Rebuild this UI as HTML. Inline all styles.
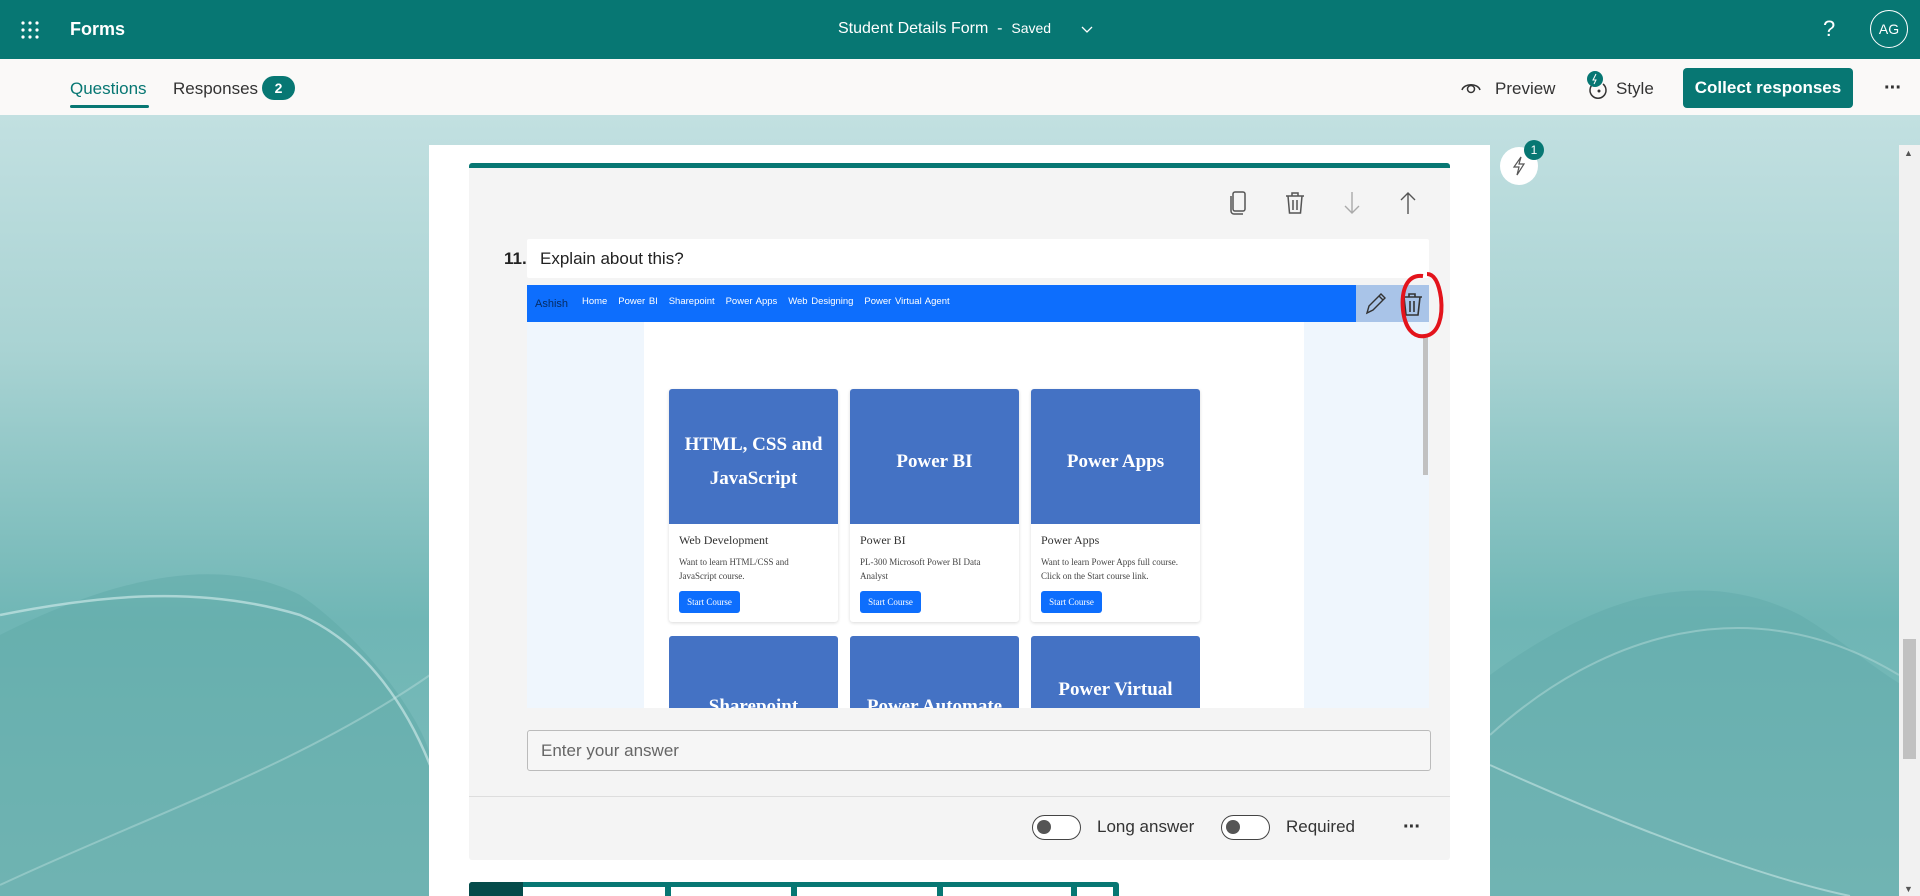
<!DOCTYPE html>
<html><head><meta charset="utf-8"><style>
*{box-sizing:border-box;margin:0;padding:0}
body{width:1920px;height:896px;overflow:hidden;font-family:"Liberation Sans",sans-serif;position:relative;background:#fff}
.abs{position:absolute}
.hdr{left:0;top:0;width:1920px;height:59px;background:#077773;color:#fff}
.sub{left:0;top:59px;width:1920px;height:56px;background:#faf9f8}
.bg{left:0;top:115px;width:1920px;height:781px;background:linear-gradient(#c2e0e1 0%,#a9d3d3 30%,#6fb6b5 65%,#7fbdbc 100%);overflow:hidden}
.t{position:absolute;white-space:nowrap}
.tog{position:absolute;width:49px;height:25px;border:1.5px solid #444;border-radius:13px;background:#fff}
.tog:after{content:"";position:absolute;left:4px;top:4px;width:14px;height:14px;border-radius:50%;background:#555}
.card{position:absolute;width:169px;height:233px;background:#fff;box-shadow:0 1px 3px rgba(0,0,0,.15);border-radius:3px;overflow:hidden;font-family:"Liberation Serif",serif}
.card .top{height:135px;background:#4472c4;color:#fff;font-weight:bold;font-size:19px;display:flex;align-items:center;justify-content:center;text-align:center;line-height:34px;padding-top:10px}
.card .h{font-size:12px;color:#333;margin:9px 10px 0}
.card .d{font-size:9px;color:#444;margin:7px 10px 0;line-height:14px}
.card .b{margin:8px 10px 0;width:61px;height:22px;background:#0d6efd;color:#fff;font-size:9px;line-height:22px;text-align:center;border-radius:3px}
.card2{position:absolute;width:169px;height:90px;background:#4472c4;border-radius:3px;color:#fff;font-weight:bold;font-size:19px;font-family:"Liberation Serif",serif;text-align:center;overflow:hidden}
</style></head><body>
<div class="abs hdr">
  <svg class="abs" style="left:20px;top:20px" width="20" height="20" viewBox="0 0 20 20" fill="#fff"><circle cx="3" cy="3" r="1.6"/><circle cx="10" cy="3" r="1.6"/><circle cx="17" cy="3" r="1.6"/><circle cx="3" cy="10" r="1.6"/><circle cx="10" cy="10" r="1.6"/><circle cx="17" cy="10" r="1.6"/><circle cx="3" cy="17" r="1.6"/><circle cx="10" cy="17" r="1.6"/><circle cx="17" cy="17" r="1.6"/></svg>
  <div class="t" style="left:70px;top:19px;font-size:18px;font-weight:bold">Forms</div>
  <div class="t" style="left:838px;top:20px;font-size:16px">Student Details Form &nbsp;- &nbsp;<span style="font-size:14px">Saved</span></div>
  <svg class="abs" style="left:1081px;top:26px" width="12" height="8" viewBox="0 0 12 8"><path d="M1 1l5 5 5-5" stroke="#fff" fill="none" stroke-width="1.3"/></svg>
  <div class="t" style="left:1823px;top:16px;font-size:22px;font-weight:300">?</div>
  <div class="abs" style="left:1870px;top:10px;width:38px;height:38px;border:1.3px solid #fff;border-radius:50%;font-size:14px;text-align:center;line-height:36px">AG</div>
</div>
<div class="abs sub">
  <div class="t" style="left:70px;top:20px;font-size:17px;color:#077773">Questions</div>
  <div class="abs" style="left:70px;top:46px;width:79px;height:3px;background:#077773;border-radius:2px"></div>
  <div class="t" style="left:173px;top:20px;font-size:17px;color:#333">Responses</div>
  <div class="abs" style="left:262px;top:17px;width:33px;height:24px;border-radius:12px;background:#077773;color:#fff;font-size:14px;font-weight:bold;text-align:center;line-height:24px">2</div>
  <svg class="abs" style="left:1460px;top:19px" width="22" height="18" viewBox="0 0 22 18"><path d="M2 12C4 5 18 5 20 12" stroke="#333" fill="none" stroke-width="1.5"/><circle cx="11" cy="11" r="3.5" stroke="#333" fill="none" stroke-width="1.5"/></svg>
  <div class="t" style="left:1495px;top:20px;font-size:17px;color:#333">Preview</div>
  <svg class="abs" style="left:1583px;top:10px" width="28" height="32" viewBox="0 0 28 32"><path d="M10 15a8 8 0 1 0 10 0" stroke="#333" fill="none" stroke-width="1.5"/><circle cx="16" cy="22" r="1.5" fill="#333"/><circle cx="12" cy="10" r="8" fill="#077773"/><path d="M13 5l-3 6h3l-2 4" stroke="#fff" fill="none" stroke-width="1"/></svg>
  <div class="t" style="left:1616px;top:20px;font-size:17px;color:#333">Style</div>
  <div class="abs" style="left:1683px;top:9px;width:170px;height:40px;background:#077773;border-radius:4px;color:#fff;font-size:17px;font-weight:bold;text-align:center;line-height:40px">Collect responses</div>
  <div class="t" style="left:1884px;top:18px;font-size:20px;color:#333;font-weight:bold;letter-spacing:-1px">···</div>
</div>
<div class="abs bg">
  <svg width="1920" height="781" viewBox="0 0 1920 781" style="position:absolute;left:0;top:0">
    <path d="M0 520 C120 460 220 440 300 480 C360 520 420 600 430 640 L430 781 L0 781Z" fill="#5fa9a8" opacity=".5"/>
    <path d="M0 770 C150 700 300 650 430 560" stroke="#a8d3d2" stroke-width="2" fill="none" opacity=".6"/>
    <path d="M0 500 C100 480 200 470 300 500 C370 530 410 600 430 650" stroke="#c8e6e5" stroke-width="2.5" fill="none" opacity=".7"/>
    <path d="M1490 560 C1600 480 1700 450 1800 500 C1850 530 1880 560 1920 580 L1920 781 L1490 781Z" fill="#5fa9a8" opacity=".45"/>
    <path d="M1490 650 C1600 700 1750 760 1850 781" stroke="#c8e6e5" stroke-width="2" fill="none" opacity=".6"/>
    <path d="M1490 620 C1600 520 1750 470 1899 560" stroke="#a8d3d2" stroke-width="2" fill="none" opacity=".6"/>
  </svg>
</div>
<!-- right scrollbar -->
<div class="abs" style="left:1899px;top:145px;width:21px;height:751px;background:#f1f1f1"></div>
<div class="abs" style="left:1903px;top:639px;width:13px;height:120px;background:#c1c1c1"></div>
<div class="t" style="left:1904px;top:148px;font-size:9px;color:#555">▲</div>
<div class="t" style="left:1904px;top:884px;font-size:9px;color:#555">▼</div>
<!-- lightning bubble -->
<div class="abs" style="left:1500px;top:147px;width:38px;height:38px;background:#fff;border-radius:50%"></div>
<svg class="abs" style="left:1510px;top:155px" width="18" height="22" viewBox="0 0 18 22"><path d="M11 2L4 12h5l-2 8 7-11h-5z" stroke="#555" fill="none" stroke-width="1.2"/></svg>
<div class="abs" style="left:1524px;top:140px;width:20px;height:20px;background:#077773;border-radius:50%;color:#fff;font-size:12px;text-align:center;line-height:20px">1</div>
<!-- form panel -->
<div class="abs" style="left:429px;top:145px;width:1061px;height:751px;background:#fff"></div>
<div class="abs" style="left:469px;top:163px;width:981px;height:697px;background:#f4f4f4;border-top:5px solid #077773;border-radius:3px"></div>
<!-- toolbar icons -->
<svg class="abs" style="left:1228px;top:190px" width="22" height="26" viewBox="0 0 22 26"><rect x="5" y="2" width="12" height="19" rx="2" stroke="#555" fill="none" stroke-width="1.5"/><path d="M3 6v15a3 3 0 0 0 3 3h9" stroke="#555" fill="none" stroke-width="1.5"/></svg>
<svg class="abs" style="left:1284px;top:190px" width="22" height="26" viewBox="0 0 22 26"><path d="M2 6h18M8 6V3h6v3M4 6l1.5 17h11L18 6M9 10v10M13 10v10" stroke="#555" fill="none" stroke-width="1.5"/></svg>
<svg class="abs" style="left:1342px;top:190px" width="20" height="26" viewBox="0 0 20 26"><path d="M10 2v21M3 16l7 7 7-7" stroke="#aaa" fill="none" stroke-width="1.4"/></svg>
<svg class="abs" style="left:1398px;top:190px" width="20" height="26" viewBox="0 0 20 26"><path d="M10 24V3M3 10l7-7 7 7" stroke="#555" fill="none" stroke-width="1.4"/></svg>
<!-- question title -->
<div class="abs" style="left:527px;top:239px;width:902px;height:39px;background:#fff;border-radius:2px"></div>
<div class="t" style="left:504px;top:249px;font-size:17px;font-weight:bold;color:#222">11.</div>
<div class="t" style="left:540px;top:249px;font-size:17px;color:#222">Explain about this?</div>
<!-- image -->
<div class="abs" style="left:527px;top:285px;width:902px;height:423px;background:#eff6fd;overflow:hidden">
  <div class="abs" style="left:0;top:0;width:902px;height:37px;background:#0d6efd"></div>
  <div class="abs" style="left:829px;top:0;width:73px;height:37px;background:#a9c4e8"></div>
  <div class="t" style="left:8px;top:13px;font-size:11px;color:#052c65">Ashish</div>
  <div class="t" style="left:55px;top:11px;font-size:9.5px;color:#fff;word-spacing:1px">Home &nbsp; Power BI &nbsp; Sharepoint &nbsp; Power Apps &nbsp; Web Designing &nbsp; Power Virtual Agent</div>
  <svg class="abs" style="left:835px;top:6px" width="26" height="26" viewBox="0 0 26 26"><path d="M5 22l2-7L19 3l4 4-12 12z M17 5l4 4" stroke="#333" fill="none" stroke-width="1.4"/></svg>
  <svg class="abs" style="left:872px;top:5px" width="26" height="28" viewBox="0 0 26 28"><path d="M3 7h20M10 7V4h6v3M5 7l2 18h12l2-18M11 11v11M15 11v11" stroke="#333" fill="none" stroke-width="1.6"/></svg>
  <div class="abs" style="left:117px;top:37px;width:660px;height:386px;background:#fff"></div>
  <div class="abs" style="left:896px;top:50px;width:5px;height:140px;background:#c1c1c1"></div>
  <div class="card" style="left:142px;top:104px"><div class="top">HTML, CSS and<br>JavaScript</div><div class="h">Web Development</div><div class="d">Want to learn HTML/CSS and<br>JavaScript course.</div><div class="b">Start Course</div></div>
  <div class="card" style="left:323px;top:104px"><div class="top">Power BI</div><div class="h">Power BI</div><div class="d">PL-300 Microsoft Power BI Data<br>Analyst</div><div class="b">Start Course</div></div>
  <div class="card" style="left:504px;top:104px"><div class="top">Power Apps</div><div class="h">Power Apps</div><div class="d">Want to learn Power Apps full course.<br>Click on the Start course link.</div><div class="b">Start Course</div></div>
  <div class="card2" style="left:142px;top:351px"><div style="margin-top:60px">Sharepoint</div></div>
  <div class="card2" style="left:323px;top:351px"><div style="margin-top:60px">Power Automate</div></div>
  <div class="card2" style="left:504px;top:351px"><div style="margin-top:43px">Power Virtual</div></div>
</div>
<!-- red circle -->
<svg class="abs" style="left:1393px;top:270px" width="56" height="72" viewBox="0 0 56 72"><path d="M30 6C14 4 8 20 10 40c2 18 10 28 22 26 14-2 18-20 16-38C46 14 42 4 34 4" stroke="#e3131b" fill="none" stroke-width="4"/></svg>
<!-- answer -->
<div class="abs" style="left:527px;top:730px;width:904px;height:41px;border:1px solid #bbb;border-radius:3px;background:#f6f6f6"></div>
<div class="t" style="left:541px;top:741px;font-size:17px;color:#666">Enter your answer</div>
<div class="abs" style="left:469px;top:796px;width:981px;height:1px;background:#ddd"></div>
<div class="tog" style="left:1032px;top:815px"></div>
<div class="t" style="left:1097px;top:817px;font-size:17px;color:#333">Long answer</div>
<div class="tog" style="left:1221px;top:815px"></div>
<div class="t" style="left:1286px;top:817px;font-size:17px;color:#333">Required</div>
<div class="t" style="left:1403px;top:816px;font-size:20px;color:#333;font-weight:bold;letter-spacing:-1px">···</div>
<!-- bottom bar -->
<div class="abs" style="left:469px;top:882px;width:650px;height:14px;background:#077773;border-radius:3px 3px 0 0"></div>
<div class="abs" style="left:469px;top:882px;width:54px;height:14px;background:#054b4a;border-radius:3px 0 0 0"></div>
<div class="abs" style="left:523px;top:887px;width:142px;height:9px;background:#fff"></div>
<div class="abs" style="left:671px;top:887px;width:120px;height:9px;background:#fff"></div>
<div class="abs" style="left:797px;top:887px;width:140px;height:9px;background:#fff"></div>
<div class="abs" style="left:943px;top:887px;width:128px;height:9px;background:#fff"></div>
<div class="abs" style="left:1077px;top:887px;width:36px;height:9px;background:#fff"></div>
</body></html>
